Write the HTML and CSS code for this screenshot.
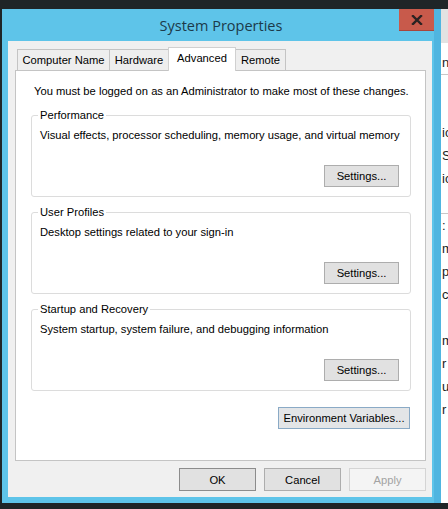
FILE: index.html
```html
<!DOCTYPE html>
<html lang="en">
<head>
  <meta charset="UTF-8" />
  <meta name="viewport" content="width=device-width, initial-scale=1.0" />
  <title>System Properties</title>
  <link rel="stylesheet" href="styles.css">
</head>
<body>
<div class="desktop">

  <!-- window behind the dialog, only its left edge shows -->
  <div class="bg-window">
    <div class="bg-header"></div>
    <div class="bg-line">nc</div>
    <div class="bg-rule"></div>
    <div class="bg-line"></div>
    <div class="bg-line"></div>
    <div class="bg-line">ic</div>
    <div class="bg-line">S</div>
    <div class="bg-line">ic</div>
    <div class="bg-line"></div>
    <div class="bg-rule"></div>
    <div class="bg-line">:</div>
    <div class="bg-line">m</div>
    <div class="bg-line">p</div>
    <div class="bg-line">c</div>
    <div class="bg-line"></div>
    <div class="bg-line">m</div>
    <div class="bg-line">r</div>
    <div class="bg-line">u</div>
    <div class="bg-line">r</div>
  </div>

  <div class="dialog">
    <div class="titlebar">
      <span class="title">System Properties</span>
      <button class="close" type="button">
        <svg width="12" height="10" viewBox="0 0 12 10">
          <path d="M2 1 L10 9 M10 1 L2 9" stroke="#2a2222" stroke-width="2.4" stroke-linecap="square" fill="none"/>
        </svg>
      </button>
    </div>

    <div class="client">
      <div class="tabs">
        <div class="tab tab-name">Computer Name</div>
        <div class="tab tab-hw">Hardware</div>
        <div class="tab tab-adv active">Advanced</div>
        <div class="tab tab-remote">Remote</div>
      </div>

      <div class="panel">
        <p class="notice">You must be logged on as an Administrator to make most of these changes.</p>

        <fieldset class="group">
          <legend>Performance</legend>
          <p class="desc">Visual effects, processor scheduling, memory usage, and virtual memory</p>
          <div class="group-actions">
            <button class="btn" type="button">Settings...</button>
          </div>
        </fieldset>

        <fieldset class="group">
          <legend>User Profiles</legend>
          <p class="desc">Desktop settings related to your sign-in</p>
          <div class="group-actions">
            <button class="btn" type="button">Settings...</button>
          </div>
        </fieldset>

        <fieldset class="group">
          <legend>Startup and Recovery</legend>
          <p class="desc">System startup, system failure, and debugging information</p>
          <div class="group-actions">
            <button class="btn" type="button">Settings...</button>
          </div>
        </fieldset>

        <div class="env-row">
          <button class="btn env" type="button">Environment Variables...</button>
        </div>
      </div>

      <div class="footer">
        <button class="btn dlg default" type="button">OK</button>
        <button class="btn dlg" type="button">Cancel</button>
        <button class="btn dlg disabled" type="button">Apply</button>
      </div>
    </div>
  </div>

</div>
</body>
</html>
```

FILE: styles.css
```css
body {
  margin: 0;
  padding: 0;
  background-color: #1f2527;
  font-family: "Liberation Sans", Arial, sans-serif;
  font-size: 11.2px;
  color: #000;
}

.desktop {
  position: relative;
  width: 448px;
  height: 509px;
  overflow: hidden;
  background-color: #1f2527;
}

/* background window */
.bg-window {
  position: absolute;
  left: 434px;
  top: 9px;
  width: 30px;
  height: 494px;
  background-color: #fff;
  border-left: 7px solid #4fb5e0;
  box-sizing: border-box;
  overflow: hidden;
}

.bg-header {
  height: 34px;
  background-color: #e2e2e2;
  margin-bottom: 8px;
}

.bg-line {
  height: 23px;
  line-height: 23px;
  font-size: 13px;
  color: #222;
  padding-left: 1px;
}

.bg-rule {
  height: 1px;
  background-color: #c8c8c8;
}

/* dialog */
.dialog {
  position: absolute;
  left: 2px;
  top: 9px;
  width: 432px;
  height: 494px;
  background-color: #5ec4e9;
  padding: 0 2px 6px 6px;
  box-sizing: border-box;
  display: flex;
  flex-direction: column;
}

.titlebar {
  position: relative;
  height: 32px;
  display: flex;
  align-items: center;
  justify-content: center;
}

.title {
  font-family: "Open Sans", "Liberation Sans", sans-serif;
  font-size: 14.5px;
  color: #1c3a4a;
  margin-left: 2px;
}

.close {
  position: absolute;
  right: -2px;
  top: 0;
  width: 35px;
  height: 22px;
  padding: 0;
  border: none;
  border-bottom: 1px solid #a8463c;
  background-color: #c85a4b;
  display: flex;
  align-items: center;
  justify-content: center;
}

.client {
  flex: 1;
  background-color: #f0f0f0;
  padding: 6px 6px 6px 7px;
  display: flex;
  flex-direction: column;
}

/* tabs */
.tabs {
  display: flex;
  align-items: flex-end;
  height: 24px;
  margin-bottom: -1px;
  padding-left: 2px;
  position: relative;
  z-index: 1;
}

.tab {
  height: 21px;
  line-height: 20px;
  box-sizing: border-box;
  border: 1px solid #c4c4c4;
  border-bottom: none;
  background-color: #eeeeee;
  text-align: center;
  margin-bottom: 1px;
  margin-right: -1px;
  white-space: nowrap;
}

.tab-name { width: 93px; }
.tab-hw { width: 60px; }
.tab-adv { width: 68px; }
.tab-remote { width: 51px; }

.tab.active {
  height: 24px;
  line-height: 20px;
  margin-bottom: 0;
  background-color: #fff;
  border-color: #d0d0d0;
  position: relative;
  z-index: 2;
}

/* panel */
.panel {
  flex: 1;
  background-color: #fff;
  border: 1px solid #c4c4c4;
  padding: 13px 14px 0 15px;
}

.notice {
  margin: 0 0 0 3px;
  line-height: 15px;
  white-space: nowrap;
}

.group {
  margin: 9px 0 0 0;
  padding: 0 11px 9px 6px;
  border: 1px solid #dcdcdc;
  border-radius: 3px;
  min-inline-size: 0;
}

.group + .group {
  margin-top: 8px;
}

.group legend {
  padding: 0 2px;
  line-height: 15px;
  color: #000;
}

.desc {
  margin: 5px 0 0 0;
  padding-left: 2px;
  line-height: 15px;
  white-space: nowrap;
}

.group-actions {
  display: flex;
  justify-content: flex-end;
  margin-top: 22px;
}

.btn {
  font-family: "Liberation Sans", Arial, sans-serif;
  font-size: 11.2px;
  color: #000;
  height: 22px;
  width: 75px;
  padding: 0;
  box-sizing: border-box;
  background-color: #e1e1e1;
  border: 1px solid #adadad;
}

.env-row {
  display: flex;
  justify-content: flex-end;
  margin-top: 16px;
  padding-right: 1px;
}

.btn.env {
  width: 132px;
  border-color: #8aaac6;
  background-color: #e3e5e7;
}

/* footer buttons */
.footer {
  display: flex;
  justify-content: flex-end;
  gap: 8px;
  padding-top: 7px;
}

.btn.dlg {
  width: 77px;
  height: 23px;
}

.btn.default {
  border-color: #8c8c8c;
}

.btn.disabled {
  background-color: #f4f4f4;
  border-color: #d4d4d4;
  color: #a3a3a3;
}
```
